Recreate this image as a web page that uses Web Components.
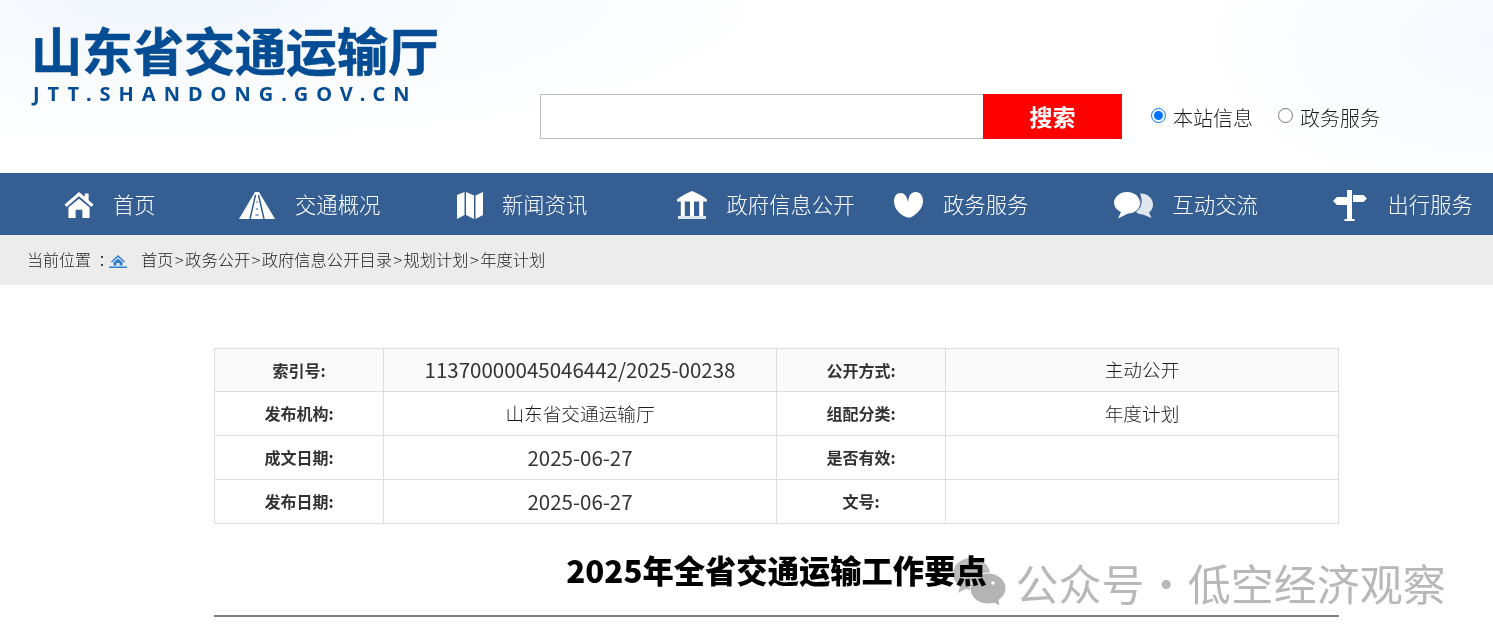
<!DOCTYPE html>
<html lang="zh"><head><meta charset="utf-8">
<style>
html,body{margin:0;padding:0;background:#fff;overflow:hidden}
body{font-family:"Noto Sans CJK SC","Noto Sans",sans-serif;color:#333;position:relative;height:643px}
</style></head><body>
<site-header></site-header>
<main-nav>
<nav-item label="首页" w="175" iw="49" icon="home"></nav-item>
<nav-item label="交通概况" w="218" iw="56" icon="road"></nav-item>
<nav-item label="新闻资讯" w="220" iw="45" icon="map"></nav-item>
<nav-item label="政府信息公开" w="217" iw="49.500" icon="gov"></nav-item>
<nav-item label="政务服务" w="220" iw="49" icon="heart"></nav-item>
<nav-item label="互动交流" w="219" iw="58.500" icon="chat"></nav-item>
<nav-item label="出行服务" w="160" iw="54.500" icon="sign"></nav-item>
</main-nav>
<bread-crumb></bread-crumb>
<info-table></info-table>
<doc-title>2025年全省交通运输工作要点</doc-title>
<water-mark></water-mark>
<script>
function def(name,html){customElements.define(name,class extends HTMLElement{constructor(){super();const s=this.attachShadow({mode:'open'});s.innerHTML=typeof html==='function'?html(this):html;}})}
const ICONS={
home:'<svg width="30" height="26" viewBox="0 0 30 27"><path fill="#fff" d="M15 0 L21 5 V1.500 H25 V8.500 L30 13 L28 15.500 L15 4.500 L2 15.500 L0 13Z"/><path fill="#fff" d="M15 7 L26 16 V27 H18.500 V18.500 H11.500 V27 H4 V16Z"/></svg>',
road:'<svg width="36" height="27" viewBox="0 0 36 27"><path fill="#fff" d="M16 0 H20 L36 27 H0Z"/><path stroke="#355e92" stroke-width="1.500" fill="none" d="M16.500 3 L11 27M19.500 3 L25 27"/><path stroke="#355e92" stroke-width="1" fill="none" d="M17.200 10h1.600M16.800 17h2.400M16.300 23h3.400"/></svg>',
map:'<svg width="26" height="27" viewBox="0 0 26 27"><path fill="#fff" d="M0 3 L7.500 0 V23 L0 27Z M9 0 L17 3.500 V27 L9 23Z"/><path fill="#fff" d="M18.500 3.500 L26 0 V23 L18.500 27Z"/></svg>',
gov:'<svg width="30" height="28" viewBox="0 0 30 28"><path fill="#fff" d="M15 0 C20 2 26 5 30 8.500 V10.500 H0 V8.500 C4 5 10 2 15 0Z"/><path fill="#fff" d="M3.800 10h4v15h-4zM13 10h4v15h-4zM22.200 10h4v15h-4z"/><path fill="#fff" opacity=".85" d="M1 25H29V28H1Z"/></svg>',
heart:'<svg width="29" height="26" viewBox="0 0 29 26"><path fill="#fff" d="M14 10 C13 5 11 1.500 7.500 1 C3 .4 0 4 0 9.500 C0 17 7 24 14 25.500 C16 26 18 25 20 23.500 C25 20 29 15 29 9 C29 3 25.500 0 21.500 0 C17 0 14.500 4 14 10Z"/></svg>',
chat:'<svg width="39" height="27" viewBox="0 0 39 27"><path fill="#fff" opacity=".85" d="M26 1.500 C33 1 39 6 39 12.500 C39 16.500 37 19 35 20.500 L37.500 26 L29 22.500 C25 22.500 23 21 21 19 C26 17 28 10 26 1.500Z"/><path fill="#fff" d="M13 0 C21 0 26 5 26 11 C26 17 21 21.500 14 21.500 L4 26.500 L7 20 C3 18 0 15 0 10.500 C0 5 6 0 13 0Z"/><path fill="none" stroke="#355e92" stroke-width="1" d="M25.500 2 C29 9 27 17 21 20"/></svg>',
sign:'<svg width="34" height="31" viewBox="0 0 34 31"><path fill="#fff" d="M14 0h5v29h2.500v2H11.500v-2H14V15H4L0 11l4-4h10z"/><path fill="#fff" d="M20 5h10.500l3.500 3.500-3.500 3.500H20z"/></svg>'
};
def('site-header',`<style>
:host{display:flex;height:173px;box-sizing:border-box;align-items:flex-start;background:radial-gradient(ellipse 620px 150px at 170px 0,#f2f7fc,rgba(255,255,255,0)),radial-gradient(ellipse 300px 170px at 100% 40px,#f5f8fd,rgba(255,255,255,0)),#fff}
.logo{margin:19px 0 0 31px;width:509px;flex:none;color:#044c93;font-weight:700}
.cn{font-size:51px;line-height:60px;white-space:nowrap;font-family:"Noto Sans CJK SC",sans-serif;-webkit-text-stroke:.6px #044c93}
.en{font-family:"Noto Sans","Liberation Sans",sans-serif;font-weight:700;font-size:20px;line-height:26px;letter-spacing:8px;white-space:nowrap;margin:2px 0 0 2px}
.search{display:flex;margin-top:94px;height:45px;flex:none}
.box{width:443px;height:45px;box-sizing:border-box;border:1px solid #bfbfbf;border-right:0;background:#fff}
.btn{width:139px;height:45px;background:#f00;color:#fff;font-weight:700;font-size:23px;display:flex;align-items:center;justify-content:center;line-height:1}
.opts{display:flex;margin:0 0 0 29px;height:45px;box-sizing:border-box;padding-top:2px;align-items:center;font-size:20px;font-weight:300;color:#1c1c1c}
label{display:flex;align-items:center;margin-right:25px;white-space:nowrap}
input{width:15px;height:15px;margin:0 7px 4px 0;flex:none}
</style>
<div class="logo"><div class="cn">山东省交通运输厅</div><div class="en">JTT.SHANDONG.GOV.CN</div></div>
<div class="search"><div class="box"></div><div class="btn">搜索</div>
<div class="opts"><label><input type="radio" name="s" checked>本站信息</label><label><input type="radio" name="s">政务服务</label></div></div>`);
def('main-nav',`<style>:host{display:flex;height:62px;background:#355e92;padding-left:64px;box-sizing:border-box;overflow:hidden}</style><slot></slot>`);
def('nav-item',el=>`<style>
:host{display:flex;align-items:center;flex:none;width:${el.getAttribute('w')}px;height:62px;color:#fff;font-size:21.330px;font-weight:300}
.i{width:${el.getAttribute('iw')}px;flex:none;display:flex;align-items:center;padding-top:2px}
span{white-space:nowrap;line-height:1}
</style><div class="i">${ICONS[el.getAttribute('icon')]}</div><span>${el.getAttribute('label')}</span>`);
def('bread-crumb',`<style>
:host{display:flex;align-items:center;height:50px;background:#ececec;padding:0 0 2px 27px;font-size:16px;font-weight:300;color:#1c1c1c;white-space:nowrap;box-sizing:border-box}
svg{margin:4px 14px 0 0;flex:none}
.col{display:block;width:11px;padding-left:7px;flex:none}
.p{display:flex;font-size:16.300px}
.p i{font-style:normal;width:11.500px;text-align:center;flex:none}
</style><span>当前位置</span><span class="col">：</span><svg width="18" height="14" viewBox="0 0 18 14"><path fill="#2a7fd0" d="M9 1 L16 7.500 L15 8.500 L9 3 L3 8.500 L2 7.500Z M4.500 8.500 L9 4.500 L13.500 8.500 V11.500 H10.500 V9 H7.500 V11.500 H4.500Z M0 12.500H18V14H0Z"/></svg><div class="p"><span>首页</span><i>&gt;</i><span>政务公开</span><i>&gt;</i><span>政府信息公开目录</span><i>&gt;</i><span>规划计划</span><i>&gt;</i><span>年度计划</span></div>`);
def('info-table',()=>{
const rows=[['索引号:','11370000045046442/2025-00238','公开方式:','主动公开'],['发布机构:','山东省交通运输厅','组配分类:','年度计划'],['成文日期:','2025-06-27','是否有效:',''],['发布日期:','2025-06-27','文号:','']];
return `<style>
:host{display:block;margin:63px 154px 0 214px;width:1125px}
.g{display:grid;grid-template-columns:169px 393px 169px 393px;grid-template-rows:43px 44px 44px 44px;border-top:1px solid #ddd;border-left:1px solid #ddd;box-sizing:border-box;width:1125px}
.c{border-right:1px solid #ddd;border-bottom:1px solid #ddd;display:flex;align-items:center;justify-content:center;font-size:18.670px;font-weight:300;color:#1c1c1c;line-height:1;white-space:nowrap;padding-bottom:1px}
.c.l{font-size:16px;font-weight:700;color:#333}
.c.n{font-size:20.500px;font-weight:400;color:#333}
.h{background:#fafafa}
</style><div class="g">${rows.map((r,i)=>r.map((t,j)=>`<div class="c ${j%2==0?'l':''} ${i==0?'h':''} ${/^\d/.test(t)?'n':''}">${t}</div>`).join('')).join('')}</div>`});
def('doc-title',`<style>
:host{display:block;margin:0 154px 0 214px;width:1125px;height:93px;box-sizing:border-box;border-bottom:2px solid #808080;text-align:center;color:#000;font-size:31.300px;font-weight:900;line-height:36px;padding-top:28px;white-space:nowrap}
</style><slot></slot>`);
def('water-mark',`<style>
:host{position:absolute;left:953px;top:555px;display:flex;align-items:flex-start;color:#b8b8b8;font-size:43px;line-height:52px;white-space:nowrap;pointer-events:none;mix-blend-mode:multiply}
svg{flex:none;margin-right:9.500px}
span{margin-top:1px;word-spacing:-9.500px}
</style><svg width="53" height="52" viewBox="0 0 53 52"><path fill="#bcbcbc" d="M18 3C8 3 0 10 0 19c0 5 3 9 7 12l-2 7 7.500-4c2 .6 3.500.8 5.500.8C28 34.800 37 28 37 19 37 10 28 3 18 3Z"/><path fill="#b4b4b4" stroke="#fff" stroke-width="1" d="M35 18C25 18 17 25 17 33.500S25 49 35 49c2.500 0 4-.3 6-.9L47 51l-1-6C50 42 53 38 53 33.500 53 25 45 18 35 18Z"/><circle cx="40" cy="28" r="1.800" fill="#fff"/></svg><span>公众号 · 低空经济观察</span>`);
</script>
</body></html>
